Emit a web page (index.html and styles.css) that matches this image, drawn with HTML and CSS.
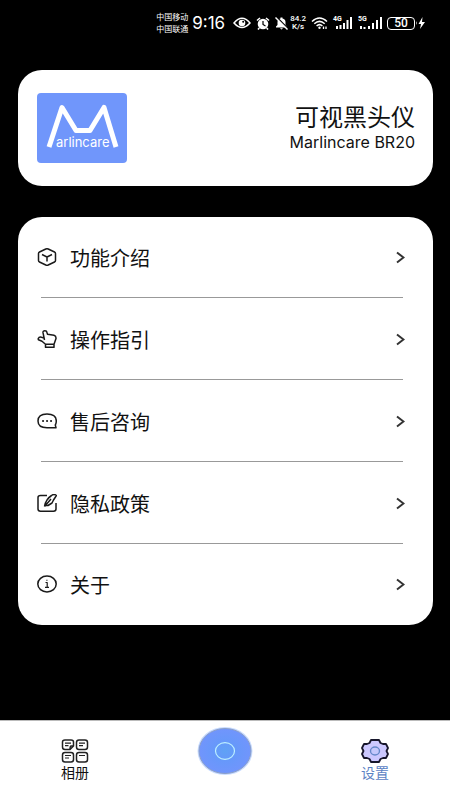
FILE: index.html
```html
<!DOCTYPE html>
<html lang="zh-CN">
<head>
<meta charset="utf-8">
<meta name="viewport" content="width=device-width, initial-scale=1">
<title>设置</title>
<link rel="stylesheet" href="styles.css">
</head>
<body>
<header class="status">
  <div class="carriers"><span>中国移动</span><span>中国联通</span></div>
  <time class="clock">9:16</time>
  <svg class="eye" width="18" height="12" viewBox="0 0 18 12" fill="none" stroke="#fff" stroke-width="1.500"><path d="M1 6Q9-3.500 17 6Q9 15 1 6Z"/><circle cx="9" cy="6" r="3.300" fill="#fff" stroke="none"/><circle cx="10.200" cy="4.800" r="1" fill="#000" stroke="none"/></svg>
  <svg width="14" height="13" viewBox="0 0 14 13"><circle cx="7" cy="7" r="5.300" fill="#fff"/><path d="M1 3.500L4 1M13 3.500L10 1M3.300 11L2 12.500M10.700 11L12 12.500" stroke="#fff" stroke-width="1.600"/><path d="M7 4V7.500L9.500 9" fill="none" stroke="#000" stroke-width="1.200"/></svg>
  <svg width="13" height="13" viewBox="0 0 13 13"><path d="M1 10.500V9.500L2.500 8V5Q2.500 2 5.500 1.500V.5H7.500V1.500Q10.500 2 10.500 5V8L12 9.500V10.500ZM5 11.300H8Q6.500 13.500 5 11.300Z" fill="#fff"/><path d="M1.500 0L13 11.500" stroke="#000" stroke-width="1.500"/><path d="M.5 .5L12.500 12.500" stroke="#fff" stroke-width="1.400"/></svg>
  <div class="speed"><span>84.2</span><span>K/s</span></div>
  <svg width="17" height="12" viewBox="0 0 17 12" fill="none" stroke="#fff" stroke-width="1.500"><path d="M1 4.500Q8.500-2.500 16 4.500M3.300 6.800Q8.500 2 13.700 6.800M5.600 9Q8.500 6.300 11.400 9"/><circle cx="8.500" cy="10.700" r="1.200" fill="#fff" stroke="none"/><path d="M12.500 9.500V12M15 9.500V12" stroke-width="1.300"/></svg>
  <div class="signal"><span>4G</span><svg width="20" height="12" viewBox="0 0 20 12" stroke="#fff" stroke-width="2"><path d="M4 9V12M7.500 8V12M11 6V12M14.500 3V12M18 0V12"/></svg></div>
  <div class="signal"><span>5G</span><svg width="24" height="12" viewBox="0 0 24 12" stroke="#fff" stroke-width="2"><path d="M3 9V12M6.500 10V12M11 9V12M15 6V12M19 3V12M23 0V12"/></svg></div>
  <div class="power"><span class="battery">50</span><svg width="9" height="12" viewBox="0 0 9 12"><path d="M0 4V8Q1.500 6 0 4ZM6.500 0L2.500 7H5L4 12L9 5H6Z" fill="#fff"/></svg></div>
</header>

<main class="content">
  <section class="card product">
    <svg class="logo" width="90" height="70" viewBox="0 0 90 70" role="img" aria-label="Marlincare">
      <rect width="90" height="70" rx="4" fill="#7096fb"/>
      <path d="M12 54L25 14.500L39 37.500H53L67 14.500L79 54" fill="none" stroke="#fff" stroke-width="5" stroke-linejoin="round"/>
      <text class="logo-text" x="19" y="54">arlincare</text>
    </svg>
    <div class="names"><h1>可视黑头仪</h1><p>Marlincare BR20</p></div>
  </section>

  <nav class="card menu" aria-label="设置">
    <a class="row" href="#features">
      <svg class="icon" viewBox="0 0 20 18"><path d="M8.800 1Q10 .5 11.200 1L17.500 4Q18.500 4.500 18.500 5.500V12.500Q18.500 13.500 17.500 14L11.200 17Q10 17.500 8.800 17L2.500 14Q1.500 13.500 1.500 12.500V5.500Q1.500 4.500 2.500 4ZM5 6.500L10 9L15 6.500M10 9V13.500"/></svg>
      <span>功能介绍</span><svg class="chevron" viewBox="0 0 9 13"><path d="M1 1.500L7.500 6.500L1 11.500"/></svg></a>
    <a class="row" href="#guide">
      <svg class="icon" viewBox="0 0 20 18"><path d="M7.500 10L6 2.700Q5.800 .8 7.900 .8Q9.700 .8 10 2.500L10.500 4.300L17 5.300Q19.300 6 19 8.500L17.800 12L17 14.200H8.500L5 11.200L1.500 9.800Q.7 8.500 2 7.500Q3.200 6.800 4.500 7.300L7 8M8.500 14.200V17.300H17V14.200"/></svg>
      <span>操作指引</span><svg class="chevron" viewBox="0 0 9 13"><path d="M1 1.500L7.500 6.500L1 11.500"/></svg></a>
    <a class="row" href="#support">
      <svg class="icon" viewBox="0 0 20 18"><path d="M19 15.700H10Q1 15.700 1 9Q1 2 10 2Q19.300 2 19.300 9Q19.300 11.500 18.300 13Z"/><path class="dots" d="M6 9H6.100M10 9H10.100M14 9H14.100"/></svg>
      <span>售后咨询</span><svg class="chevron" viewBox="0 0 9 13"><path d="M1 1.500L7.500 6.500L1 11.500"/></svg></a>
    <a class="row" href="#privacy">
      <svg class="icon" viewBox="0 0 20 18"><path d="M10 1.500H3.500Q1 1.500 1 3.500V15Q1 17.200 3.500 17.200H16.500Q19 17.200 19 15V9M7.500 12.500Q9 5 14.500 1.500Q17-.5 19.500 1.500L17.500 4.500L16.500 6L15 9L11 11.500H8.500M7.500 12.500L14 5"/></svg>
      <span>隐私政策</span><svg class="chevron" viewBox="0 0 9 13"><path d="M1 1.500L7.500 6.500L1 11.500"/></svg></a>
    <a class="row" href="#about">
      <svg class="icon" viewBox="0 0 20 18"><ellipse cx="10" cy="9" rx="9.200" ry="7.900"/><path class="thin" d="M8.500 7.500H10.200V12M8 12.300H12M9.900 4.800V5.800"/></svg>
      <span>关于</span><svg class="chevron" viewBox="0 0 9 13"><path d="M1 1.500L7.500 6.500L1 11.500"/></svg></a>
  </nav>
</main>

<nav class="tabs" aria-label="主导航">
  <a class="tab" href="#album">
    <svg width="28" height="24" viewBox="0 0 28 24" fill="none" stroke="#222" stroke-width="1.500"><path d="M4 1H10Q12.500 1 12.500 3V7L9 10.500H4Q1.500 10.500 1.500 8V3Q1.500 1 4 1ZM12.500 7H10Q9 7 9 10.500"/><rect x="15.500" y="1" width="11" height="9.500" rx="2.500"/><rect x="1.500" y="13.500" width="11" height="9.500" rx="2.500"/><rect x="15.500" y="13.500" width="11" height="9.500" rx="2.500"/><path d="M4 4.200H10M4 6.700H7.500M18 4.200H24M18 6.700H22M4 16.500H10M4 19H8M18 16.500H24" stroke-width="1.200"/></svg>
    <span>相册</span></a>
  <button class="capture" type="button" aria-label="拍摄">
    <svg width="56" height="50" viewBox="0 0 56 50"><defs><radialGradient id="glow"><stop offset="0" stop-color="#5fa2f5"/><stop offset=".45" stop-color="#6798fa"/><stop offset="1" stop-color="#7195fc"/></radialGradient></defs><ellipse cx="28" cy="25" rx="27.500" ry="24" fill="#c9dcff"/><ellipse cx="28" cy="25" rx="26" ry="22.500" fill="url(#glow)" stroke="#8b9fc9"/><ellipse cx="28" cy="25" rx="9.500" ry="8.300" fill="none" stroke="#bdf0ff" stroke-width="1.200"/></svg>
  </button>
  <a class="tab active" href="#settings" aria-current="page">
    <svg width="28" height="24" viewBox="0 0 28 24"><path d="M10 1H18L19.500 4L22 5H25L27 9L25.500 12L27 15L25 19H22L19.500 20L18 23H10L8.500 20L6 19H3L1 15L2.500 12L1 9L3 5H6L8.500 4Z" fill="#ccc8ff" stroke="#17162b" stroke-width="1.800" stroke-linejoin="round"/><ellipse cx="14" cy="12" rx="4.500" ry="4" fill="#c5c8fc" stroke="#6688ca" stroke-width="1.400"/></svg>
    <span>设置</span></a>
</nav>
</body>
</html>
```
FILE: styles.css
```css
* { box-sizing: border-box; }

body {
  margin: 0;
  min-height: 100vh;
  display: flex;
  flex-direction: column;
  background: #000;
  color: #111;
  font-family: "Noto Sans CJK SC", sans-serif;
}

svg { display: block; flex: none; }
a { color: inherit; text-decoration: none; }

.status {
  display: flex;
  align-items: center;
  justify-content: flex-end;
  gap: 5px;
  height: 46px;
  padding-right: 25px;
  color: #fff;
}

.carriers,
.speed {
  display: flex;
  flex-direction: column;
  flex: none;
}

.carriers { font-size: 8px; line-height: 12px; margin-right: -1px; }

.speed {
  align-items: center;
  margin-left: -3px;
  font: 500 8px/8px Roboto, sans-serif;
}

.clock { font: 17px/20px Inter, sans-serif; }
.eye { margin-left: 3px; }

.signal { position: relative; }
.signal span {
  position: absolute;
  top: -1px;
  left: 0;
  font: 700 7px/7px Roboto, sans-serif;
}

.power { display: flex; align-items: center; gap: 1px; }

.battery {
  width: 28px;
  border: 1px solid #fff;
  border-radius: 4px;
  font: 500 12px/11px Roboto, sans-serif;
  text-align: center;
}

.content {
  flex: 1;
  display: flex;
  flex-direction: column;
  gap: 31px;
  padding: 24px 17px 24px 18px;
}

.card {
  background: #fff;
  border-radius: 24px;
}

.product {
  display: flex;
  align-items: center;
  justify-content: space-between;
  padding: 23px 18px 23px 19px;
}

.logo-text { fill: #fff; font: 13px Inter, sans-serif; }

.names { text-align: right; }
.names h1 { margin: 0; font-size: 24px; font-weight: 400; line-height: 28px; }
.names p { margin: 0; font: 16px/24px Inter, sans-serif; }

.row {
  position: relative;
  display: flex;
  align-items: center;
  gap: 13px;
  height: 82px;
  padding: 0 28px 2px 19px;
  font-size: 20px;
}

.row:last-child { height: 80px; }

.row + .row::before {
  content: "";
  position: absolute;
  top: -2px;
  left: 23px;
  right: 30px;
  height: 1px;
  background: #999;
}

.icon {
  width: 20px;
  height: 18px;
  fill: none;
  stroke: #1a1a1a;
  stroke-width: 1.5;
  stroke-linejoin: round;
}

.icon .dots { stroke-width: 2; stroke-linecap: round; }
.icon .thin { stroke-width: 1.2; }

.chevron {
  width: 9px;
  height: 13px;
  margin-left: auto;
  fill: none;
  stroke: #333;
  stroke-width: 2;
}

.tabs {
  display: grid;
  grid-template-columns: repeat(3, 1fr);
  justify-items: center;
  align-items: start;
  height: 80px;
  background: #fff;
  border-top: 1px solid #bbb;
}

.tab {
  display: flex;
  flex-direction: column;
  align-items: center;
  padding-top: 18px;
  font-size: 14px;
  line-height: 18px;
}

.active { color: #5b82c4; }

.capture {
  margin: 5px 0 0;
  padding: 0;
  border: 0;
  background: none;
}
```
